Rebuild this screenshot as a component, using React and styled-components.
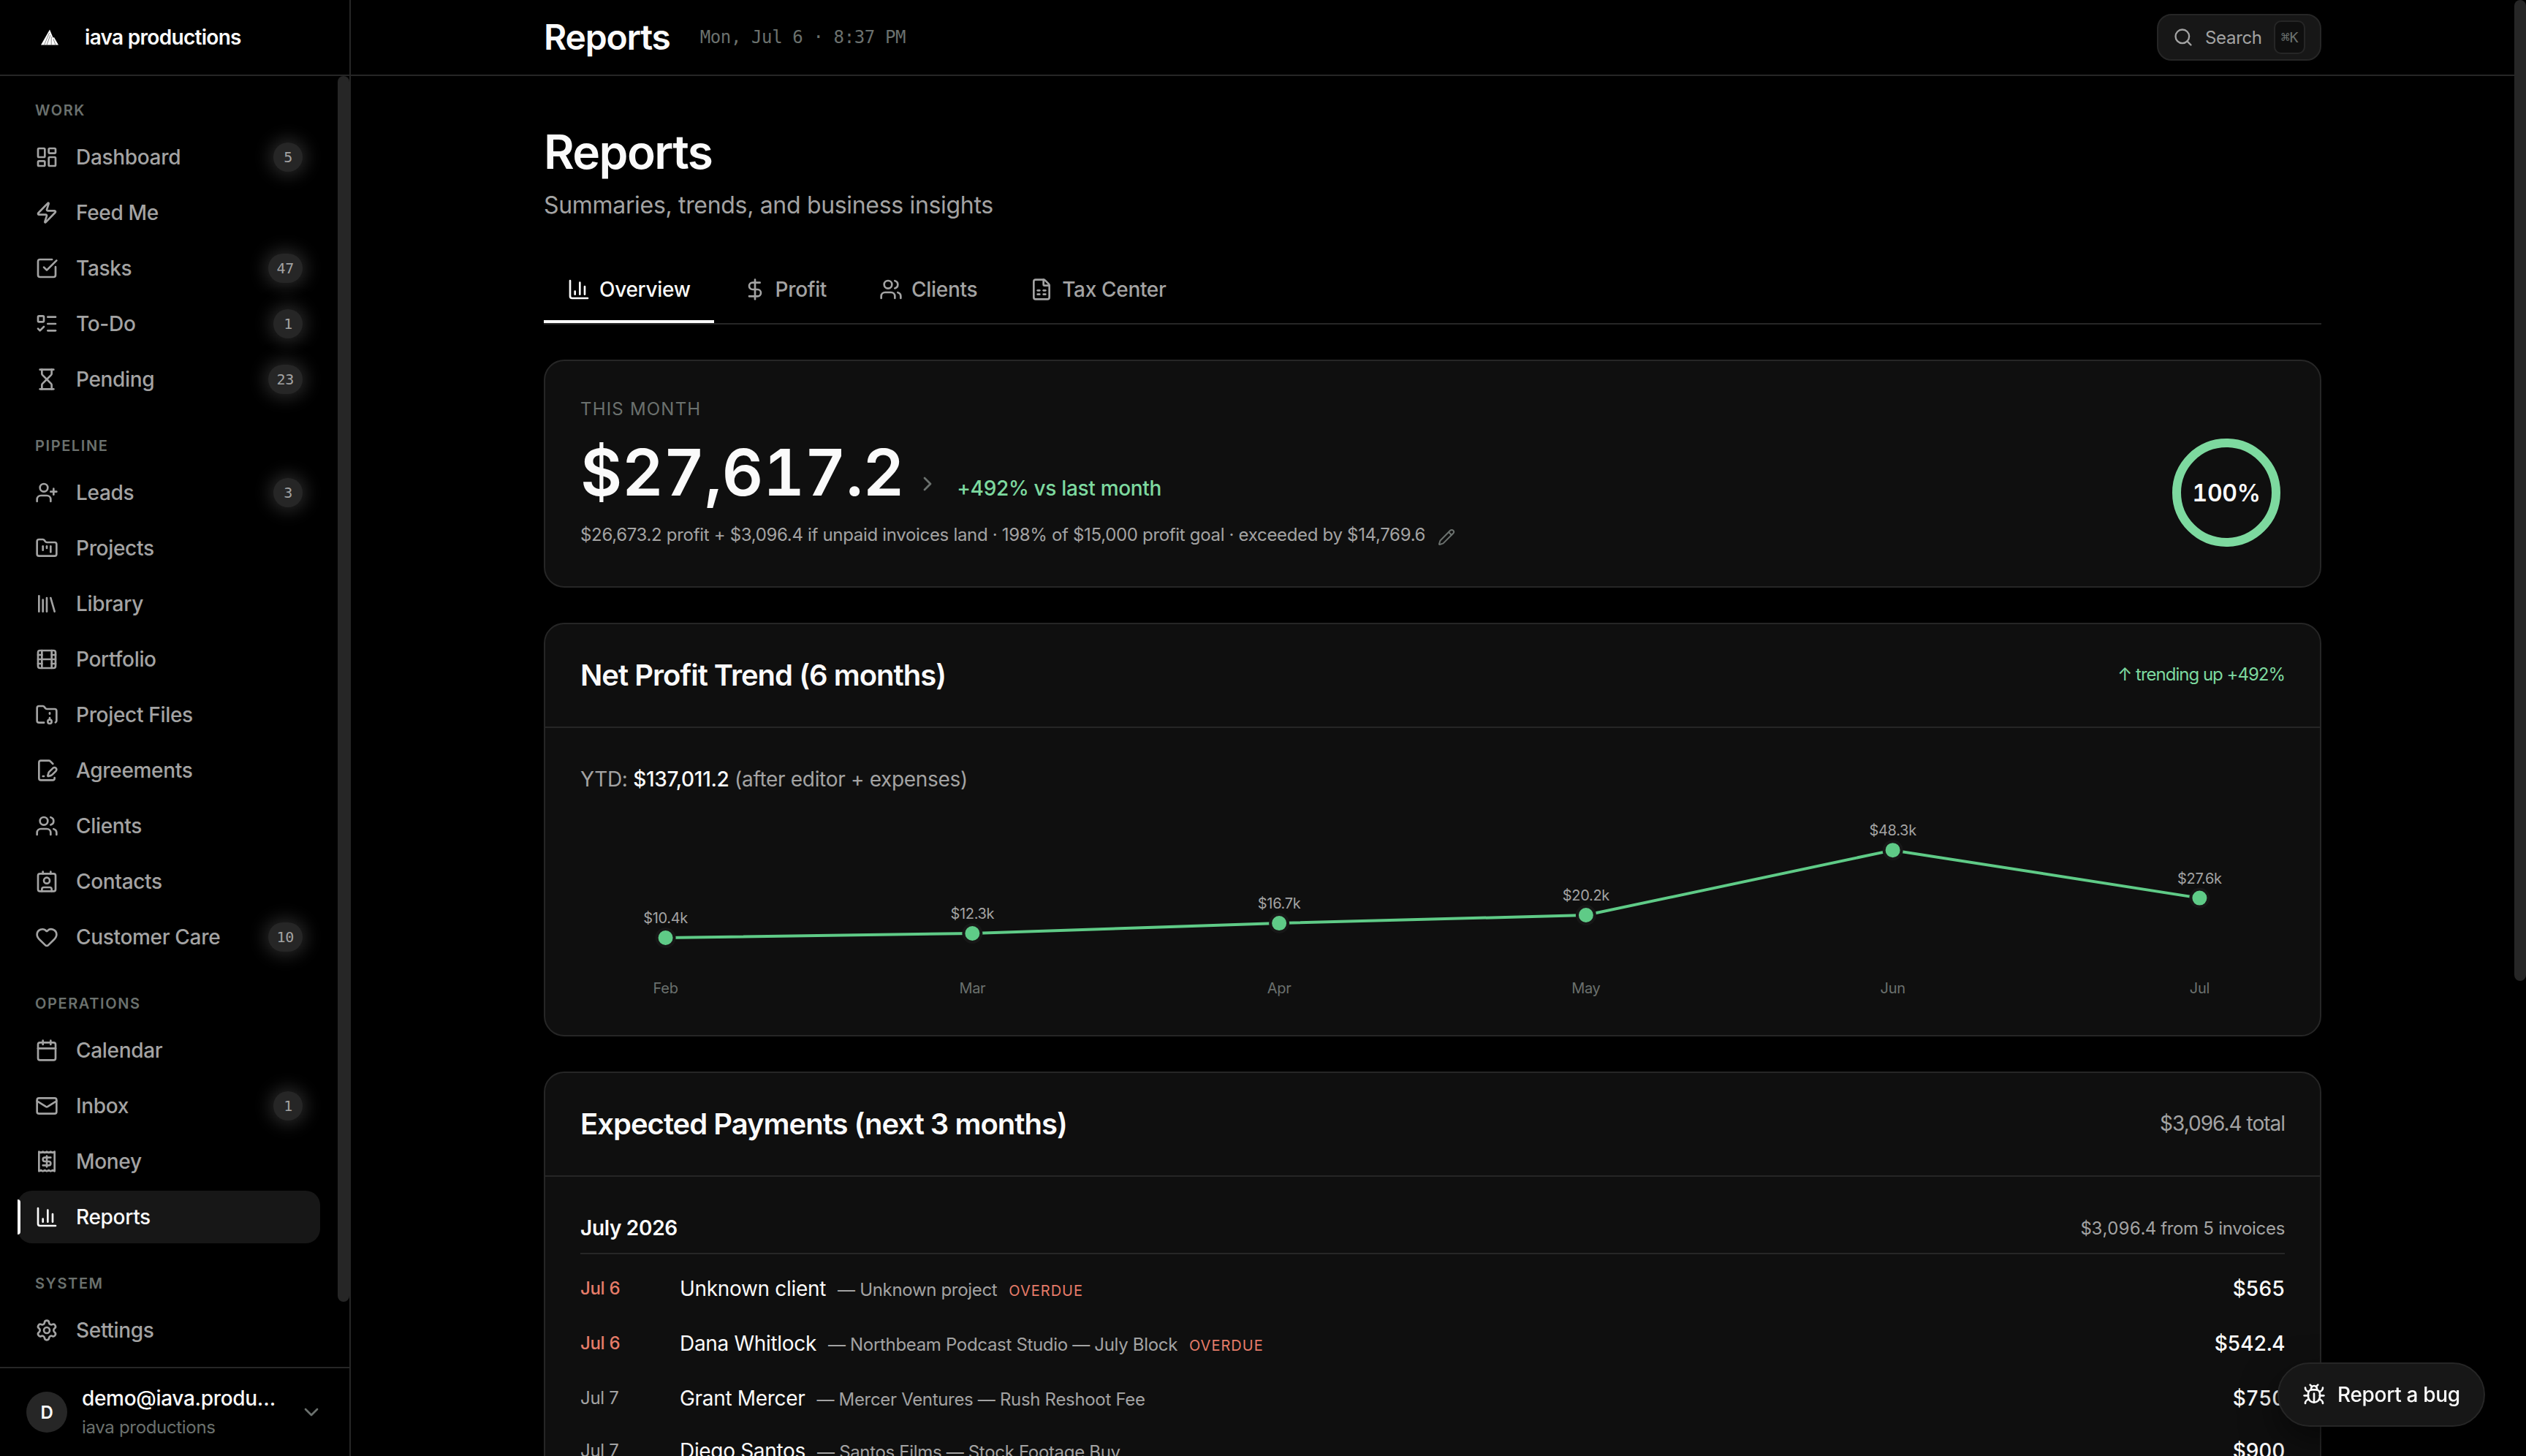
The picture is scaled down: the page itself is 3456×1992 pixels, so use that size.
import React from "react";
import styled, { createGlobalStyle } from "styled-components";
import {
  LayoutDashboard, Zap, SquareCheckBig, ListTodo, Hourglass, UserPlus, FolderKanban,
  Library, Film, FolderArchive, FilePenLine, Users, Contact, Heart, Calendar, Mail,
  Receipt, ChartColumn, Settings, ChevronDown, ChevronRight, Search, DollarSign,
  FileSpreadsheet, Pencil, Bug,
} from "lucide-react";

const sans = `Inter, "Liberation Sans", sans-serif`;
const mono = `"DejaVu Sans Mono", "Liberation Mono", monospace`;

const c = {
  line: "#262626",
  card: "#0f0f0f",
  raised: "#171717",
  text: "#fafafa",
  soft: "#a3a3a3",
  faint: "#6b716e",
  green: "#7dd99f",
  stroke: "#5fcb87",
  red: "#e67c69",
};

const GlobalStyle = createGlobalStyle`
  * { box-sizing: border-box; }
  body {
    margin: 0;
    background: #000;
    color: ${c.text};
    font-family: ${sans};
    letter-spacing: -0.32px;
    overflow: hidden;
  }
  h1, h2, h3, p { margin: 0; }
  svg { flex: none; }
`;

const Shell = styled.div`
  display: flex;
  width: 3456px;
  height: 1992px;
  overflow: hidden;
  background: #000;
`;

const Sidebar = styled.aside`
  width: 480px;
  flex: none;
  display: flex;
  flex-direction: column;
  border-right: 2px solid ${c.line};
`;

const Brand = styled.div`
  height: 104px;
  flex: none;
  display: flex;
  align-items: center;
  gap: 36px;
  padding-left: 56px;
  border-bottom: 2px solid ${c.line};
  font-size: 28px;
  font-weight: 600;
  letter-spacing: -0.7px;
`;

const NavArea = styled.div`
  flex: 1;
  min-height: 0;
  display: flex;
  justify-content: space-between;
  overflow: hidden;
`;

const Nav = styled.nav`
  width: 438px;
  padding: 30px 0 0 24px;
  display: flex;
  flex-direction: column;
  gap: 38px;
`;

const Thumb = styled.div`
  width: 16px;
  height: ${(p) => p.$height}px;
  border-radius: 8px;
  background: ${c.line};
`;

const GroupLabel = styled.div`
  height: 45px;
  padding-left: 24px;
  line-height: 35px;
  font-size: 20px;
  font-weight: 600;
  letter-spacing: 1.6px;
  color: ${c.faint};
`;

const Items = styled.div`
  display: flex;
  flex-direction: column;
  gap: 4px;
`;

const Item = styled.a`
  position: relative;
  height: 72px;
  display: flex;
  align-items: center;
  gap: 24px;
  padding: 0 24px;
  border-radius: 20px;
  font-size: 28px;
  font-weight: 500;
  color: ${(p) => (p.$active ? c.text : c.soft)};
  background: ${(p) => (p.$active ? c.raised : "transparent")};
`;

const ActiveBar = styled.span`
  position: absolute;
  left: 0;
  top: 12px;
  width: 4px;
  height: 48px;
  border-radius: 0 4px 4px 0;
  background: ${c.text};
`;

const ItemText = styled.span`
  flex: 1;
`;

const Count = styled.span`
  min-width: 40px;
  height: 40px;
  padding: 0 12px;
  display: flex;
  align-items: center;
  justify-content: center;
  border-radius: 20px;
  background: ${c.line};
  box-shadow: 0 0 22px 6px ${c.line};
  font-family: ${mono};
  font-size: 20px;
`;

const Account = styled.div`
  height: 122px;
  flex: none;
  display: flex;
  align-items: center;
  padding: 0 36px;
  gap: 20px;
  border-top: 2px solid ${c.line};
`;

const Avatar = styled.div`
  width: 56px;
  height: 56px;
  flex: none;
  display: grid;
  place-items: center;
  border-radius: 50%;
  background: ${c.line};
  font-size: 24px;
  font-weight: 600;
`;

const AccountText = styled.div`
  width: 278px;
`;

const AccountName = styled.div`
  font-size: 28px;
  line-height: 41px;
  font-weight: 500;
`;

const AccountOrg = styled.div`
  font-size: 24px;
  line-height: 37px;
  color: ${c.faint};
`;

const Main = styled.main`
  flex: 1;
  min-width: 0;
`;

const TopBar = styled.header`
  height: 104px;
  display: flex;
  align-items: center;
  padding: 0 264px;
  border-bottom: 2px solid ${c.line};
`;

const TopTitle = styled.h2`
  padding-bottom: 2px;
  font-size: 48px;
  font-weight: 600;
  letter-spacing: -1.2px;
`;

const Clock = styled.span`
  margin-left: 41px;
  font-family: ${mono};
  font-size: 24px;
  letter-spacing: -0.38px;
  color: ${c.faint};
`;

const SearchButton = styled.div`
  margin-left: auto;
  width: 225px;
  height: 64px;
  display: flex;
  align-items: center;
  gap: 16px;
  padding: 0 20px;
  border: 2px solid ${c.line};
  border-radius: 20px;
  background: ${c.raised};
  font-size: 24px;
  color: ${c.soft};
`;

const Key = styled.span`
  margin-left: auto;
  width: 43px;
  height: 46px;
  display: grid;
  place-items: center;
  border: 2px solid ${c.line};
  border-radius: 10px;
  background: ${c.card};
  font-family: ${mono};
  font-size: 20px;
  color: ${c.faint};
`;

const Page = styled.div`
  padding: 64px 264px 0;
  display: flex;
  flex-direction: column;
`;

const Title = styled.h1`
  font-size: 64px;
  line-height: 80px;
  font-weight: 600;
  letter-spacing: -1.6px;
`;

const Subtitle = styled.p`
  margin-top: 9px;
  font-size: 32px;
  line-height: 48px;
  color: ${c.soft};
`;

const Tabs = styled.div`
  margin-top: 47px;
  height: 92px;
  display: flex;
  gap: 8px;
  border-bottom: 2px solid ${c.line};
`;

const Tab = styled.div`
  height: 90px;
  display: flex;
  align-items: center;
  gap: 12px;
  padding: 2px 32px 0;
  font-size: 28px;
  font-weight: 500;
  color: ${(p) => (p.$active ? c.text : c.soft)};
  border-bottom: 4px solid ${(p) => (p.$active ? c.text : "transparent")};
`;

const Card = styled.section`
  margin-top: 48px;
  height: ${(p) => p.$height}px;
  flex: none;
  border: 2px solid ${c.line};
  border-radius: 28px;
  background: ${c.card};
`;

const Summary = styled(Card)`
  display: flex;
  justify-content: space-between;
  align-items: flex-end;
  padding: 48px;
`;

const SummaryText = styled.div`
  height: 212px;
`;

const Overline = styled.div`
  font-size: 24px;
  line-height: 36px;
  letter-spacing: 1.2px;
  color: ${c.faint};
`;

const Amount = styled.div`
  display: flex;
  align-items: baseline;
  height: 136px;
`;

const BigNumber = styled.span`
  margin-right: 16px;
  font-size: 88px;
  line-height: 136px;
  font-weight: 600;
  font-variant-numeric: tabular-nums;
`;

const Change = styled.span`
  margin-left: 24px;
  font-size: 28px;
  font-weight: 500;
  color: ${c.green};
`;

const Breakdown = styled.p`
  display: flex;
  align-items: center;
  gap: 17px;
  font-size: 24px;
  line-height: 36px;
  color: ${c.soft};
  svg { margin-top: 6px; }
`;

const CardHead = styled.div`
  height: 142px;
  display: flex;
  align-items: center;
  justify-content: space-between;
  padding: 0 48px 2px;
  border-bottom: 2px solid ${c.line};
  letter-spacing: -1px;
`;

const CardTitle = styled.h3`
  font-size: 40px;
  font-weight: 600;
`;

const HeadNote = styled.span`
  font-size: ${(p) => p.$size}px;
  line-height: 42px;
  color: ${(p) => p.$color};
`;

const CardBody = styled.div`
  padding: 48px 48px 0;
`;

const Ytd = styled.p`
  font-size: 28px;
  line-height: 44px;
  color: ${c.soft};
  strong { font-weight: 500; color: ${c.text}; }
`;

const MonthRow = styled.div`
  height: 58px;
  display: flex;
  align-items: center;
  justify-content: space-between;
  padding-bottom: 12px;
  border-bottom: 2px solid ${c.line};
`;

const MonthName = styled.span`
  font-size: 28px;
  font-weight: 600;
`;

const MonthTotal = styled.span`
  font-size: 24px;
  font-variant-numeric: tabular-nums;
  color: ${c.soft};
`;

const Payments = styled.div`
  padding-top: 11px;
`;

const Payment = styled.div`
  height: ${(p) => (p.$late ? 75 : 72)}px;
  display: flex;
  align-items: baseline;
  padding-top: 15px;
  font-size: 28px;
  line-height: 42px;
`;

const PayDate = styled.span`
  width: 136px;
  align-self: flex-start;
  font-size: 24px;
  font-weight: ${(p) => (p.$late ? 500 : 400)};
  color: ${(p) => (p.$late ? c.red : c.soft)};
`;

const Payer = styled.span`
  flex: 1;
`;

const Project = styled.span`
  margin-left: 16px;
  font-size: 24px;
  color: ${c.soft};
`;

const Overdue = styled.span`
  margin-left: 16px;
  font-size: 20px;
  letter-spacing: 1px;
  color: ${c.red};
`;

const PayAmount = styled.span`
  font-weight: 500;
  font-variant-numeric: tabular-nums;
`;

const PageScroll = styled.div`
  width: 16px;
  flex: none;
`;

const BugButton = styled.button`
  position: fixed;
  left: 3116px;
  top: 1864px;
  width: 284px;
  height: 88px;
  display: flex;
  align-items: center;
  gap: 16px;
  padding: 0 0 0 32px;
  border: 2px solid ${c.line};
  border-radius: 44px;
  background: ${c.raised};
  box-shadow: 0 20px 50px rgba(0, 0, 0, 0.5);
  font-family: ${sans};
  font-size: 28px;
  font-weight: 500;
  letter-spacing: -0.32px;
  white-space: nowrap;
  color: ${c.text};
`;

const groups = [
  ["WORK", [
    ["Dashboard", LayoutDashboard, "5"],
    ["Feed Me", Zap],
    ["Tasks", SquareCheckBig, "47"],
    ["To-Do", ListTodo, "1"],
    ["Pending", Hourglass, "23"],
  ]],
  ["PIPELINE", [
    ["Leads", UserPlus, "3"],
    ["Projects", FolderKanban],
    ["Library", Library],
    ["Portfolio", Film],
    ["Project Files", FolderArchive],
    ["Agreements", FilePenLine],
    ["Clients", Users],
    ["Contacts", Contact],
    ["Customer Care", Heart, "10"],
  ]],
  ["OPERATIONS", [
    ["Calendar", Calendar],
    ["Inbox", Mail, "1"],
    ["Money", Receipt],
    ["Reports", ChartColumn, null, true],
  ]],
  ["SYSTEM", [["Settings", Settings]]],
];

const tabs = [
  ["Overview", ChartColumn, true],
  ["Profit", DollarSign],
  ["Clients", Users],
  ["Tax Center", FileSpreadsheet],
];

const trend = [
  ["Feb", 10.4], ["Mar", 12.3], ["Apr", 16.7], ["May", 20.2], ["Jun", 48.3], ["Jul", 27.6],
];

const payments = [
  ["Jul 6", "Unknown client", "Unknown project", "$565", true],
  ["Jul 6", "Dana Whitlock", "Northbeam Podcast Studio — July Block", "$542.4", true],
  ["Jul 7", "Grant Mercer", "Mercer Ventures — Rush Reshoot Fee", "$750", false],
  ["Jul 7", "Diego Santos", "Santos Films — Stock Footage Buy", "$900", false],
];

function Logo() {
  return (
    <svg width="24" height="22" viewBox="0 0 24 22">
      <path d="M12 0.500 L16.600 11.500 L18 11 L24 21.500 H0 Z" fill="#fff" />
      <path d="M11.500 5 L4.500 21.500 M12.800 8 L8 21.500 M14.200 10 V21.500 M17 13.500 L20 21.500" stroke="#555" strokeWidth="0.7" fill="none" />
    </svg>
  );
}

function Ring() {
  return (
    <svg width="160" height="160" viewBox="0 0 160 160">
      <circle cx="80" cy="80" r="68" fill="none" stroke={c.green} strokeWidth="12" />
      <text x="80" y="91.500" textAnchor="middle" fontSize="32" fontWeight="600" fill={c.text} style={{ fontVariantNumeric: "tabular-nums" }}>100%</text>
    </svg>
  );
}

function TrendChart() {
  const pts = trend.map(([label, v], i) => ({
    label, v, x: 116.6 + 419.76 * i, y: 195 - (v - 10.4) * 3.162,
  }));
  return (
    <svg width="2332" height="280" viewBox="0 0 2332 280" display="block">
      <polyline points={pts.map((p) => `${p.x},${p.y}`).join(" ")} fill="none" stroke={c.stroke} strokeWidth="4" />
      {pts.map((p) => (
        <g key={p.label} fontSize="20" textAnchor="middle">
          <circle cx={p.x} cy={p.y} r="12" fill={c.stroke} stroke="#171717" strokeWidth="4" />
          <text x={p.x} y={p.y - 20} fill={c.soft}>${p.v}k</text>
          <text x={p.x} y="271" fill={c.faint}>{p.label}</text>
        </g>
      ))}
    </svg>
  );
}

export default function App() {
  return (
    <Shell>
      <GlobalStyle />
      <Sidebar>
        <Brand><Logo />iava productions</Brand>
        <NavArea>
          <Nav>
            {groups.map(([label, items]) => (
              <div key={label}>
                <GroupLabel>{label}</GroupLabel>
                <Items>
                  {items.map(([name, Icon, count, active]) => (
                    <Item key={name} $active={active}>
                      {active && <ActiveBar />}
                      <Icon size={32} />
                      <ItemText>{name}</ItemText>
                      {count && <Count>{count}</Count>}
                    </Item>
                  ))}
                </Items>
              </div>
            ))}
          </Nav>
          <Thumb $height={1677} />
        </NavArea>
        <Account>
          <Avatar>D</Avatar>
          <AccountText>
            <AccountName>demo@iava.produ…</AccountName>
            <AccountOrg>iava productions</AccountOrg>
          </AccountText>
          <ChevronDown size={32} color={c.faint} />
        </Account>
      </Sidebar>
      <Main>
        <TopBar>
          <TopTitle>Reports</TopTitle>
          <Clock>Mon, Jul 6 · 8:37 PM</Clock>
          <SearchButton>
            <Search size={28} />
            <span>Search</span>
            <Key>⌘K</Key>
          </SearchButton>
        </TopBar>
        <Page>
          <Title>Reports</Title>
          <Subtitle>Summaries, trends, and business insights</Subtitle>
          <Tabs>
            {tabs.map(([name, Icon, active]) => (
              <Tab key={name} $active={active}><Icon size={32} />{name}</Tab>
            ))}
          </Tabs>
          <Summary $height={312}>
            <SummaryText>
              <Overline>THIS MONTH</Overline>
              <Amount>
                <BigNumber>$27,617.2</BigNumber>
                <ChevronRight size={32} color={c.faint} />
                <Change>+492% vs last month</Change>
              </Amount>
              <Breakdown>
                $26,673.2 profit + $3,096.4 if unpaid invoices land · 198% of $15,000 profit goal · exceeded by $14,769.6
                <Pencil size={24} color={c.faint} />
              </Breakdown>
            </SummaryText>
            <Ring />
          </Summary>
          <Card $height={566}>
            <CardHead>
              <CardTitle>Net Profit Trend (6 months)</CardTitle>
              <HeadNote $size={24} $color={c.green}>↑ trending up +492%</HeadNote>
            </CardHead>
            <CardBody>
              <Ytd>YTD: <strong>$137,011.2</strong> (after editor + expenses)</Ytd>
              <TrendChart />
            </CardBody>
          </Card>
          <Card $height={700}>
            <CardHead>
              <CardTitle>Expected Payments (next 3 months)</CardTitle>
              <HeadNote $size={28} $color={c.soft}>$3,096.4 total</HeadNote>
            </CardHead>
            <CardBody>
              <MonthRow>
                <MonthName>July 2026</MonthName>
                <MonthTotal>$3,096.4 from 5 invoices</MonthTotal>
              </MonthRow>
              <Payments>
                {payments.map(([date, payer, project, amount, late]) => (
                  <Payment key={payer} $late={late}>
                    <PayDate $late={late}>{date}</PayDate>
                    <Payer>
                      {payer}
                      <Project>— {project}</Project>
                      {late && <Overdue>OVERDUE</Overdue>}
                    </Payer>
                    <PayAmount>{amount}</PayAmount>
                  </Payment>
                ))}
              </Payments>
            </CardBody>
          </Card>
        </Page>
      </Main>
      <PageScroll><Thumb $height={1342} /></PageScroll>
      <BugButton><Bug size={32} />Report a bug</BugButton>
    </Shell>
  );
}
